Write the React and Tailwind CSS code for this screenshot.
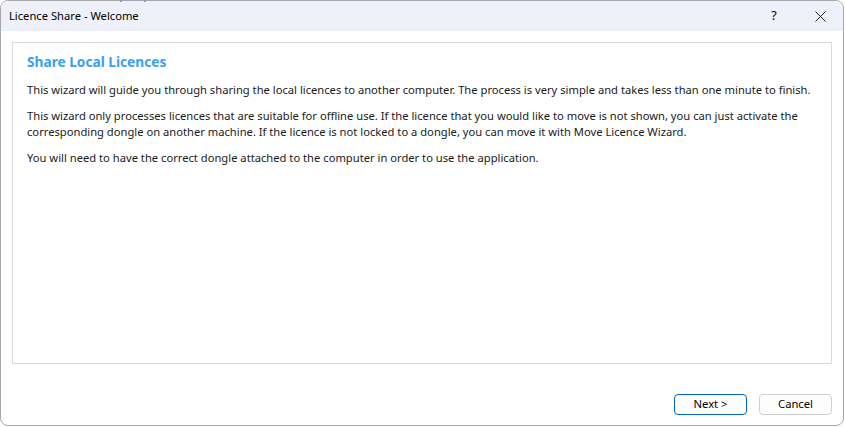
export default function App() {
  return (
    <div className="w-[845px] h-[427px] bg-white relative overflow-hidden" style={{ fontFamily: '"Noto Sans", "Open Sans", sans-serif' }}>
      <div className="absolute left-0 top-0 flex gap-[22px] pl-[120px]">
        <span className="w-[2px] h-[2px] bg-[#9a9a9a]" />
        <span className="w-[2px] h-[2px] bg-[#9a9a9a]" />
      </div>
      <div className="h-[426px] w-[844px] border border-[#a8a8a8] rounded-lg flex flex-col overflow-hidden bg-white">
        <div className="h-[30px] bg-[#eef1f9] flex items-center shrink-0">
          <span className="pl-[8px] text-[11.2px] text-black flex-1">Licence Share - Welcome</span>
          <span className="w-[46px] text-center text-[12.5px] text-black">?</span>
          <span className="w-[46px] flex justify-center">
            <svg width="11" height="11" viewBox="0 0 11 11">
              <path d="M0.5 0.5 L10.5 10.5 M10.5 0.5 L0.5 10.5" stroke="#222" strokeWidth="1" />
            </svg>
          </span>
        </div>
        <div className="flex-1 flex flex-col px-[11px] pt-[11px] pb-[10px]">
          <div className="h-[322px] border border-[#d9d9d9] px-[14px] pt-[9px] text-[11.2px] text-[#1a1a1a] leading-[16px]">
            <h1 className="text-[13.7px] font-bold text-[#3a9ff0] leading-[20px] mb-[10px]">Share Local Licences</h1>
            <p className="mb-[10px]">This wizard will guide you through sharing the local licences to another computer. The process is very simple and takes less than one minute to finish.</p>
            <p className="mb-[10px]">This wizard only processes licences that are suitable for offline use. If the licence that you would like to move is not shown, you can just activate the corresponding dongle on another machine. If the licence is not locked to a dongle, you can move it with Move Licence Wizard.</p>
            <p>You will need to have the correct dongle attached to the computer in order to use the application.</p>
          </div>
          <div className="flex justify-end gap-[12px] mt-[30px] pr-[0px]">
            <button className="w-[73px] h-[21px] border border-[#0067c0] rounded-[4px] bg-[#fdfdfd] text-[11.2px] text-black">Next &gt;</button>
            <button className="w-[73px] h-[21px] border border-[#d0d0d0] rounded-[4px] bg-[#fdfdfd] text-[11.2px] text-black">Cancel</button>
          </div>
        </div>
      </div>
    </div>
  );
}
